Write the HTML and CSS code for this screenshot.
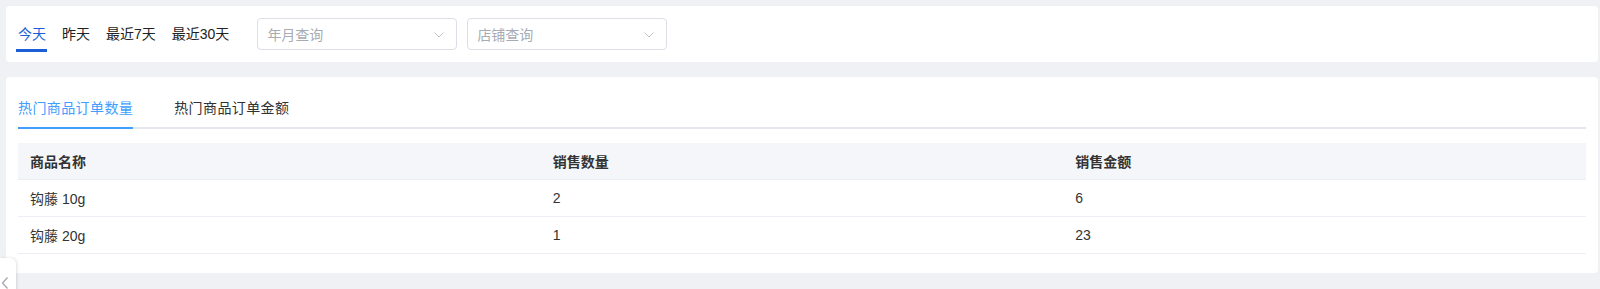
FILE: index.html
```html
<!DOCTYPE html>
<html lang="zh-CN">
<head>
<meta charset="utf-8">
<title>热门商品</title>
<link rel="stylesheet" href="styles.css">
</head>
<body>
<div class="page">
  <div class="card filter-card">
    <div class="date-tabs">
      <span class="date-tab active">今天</span>
      <span class="date-tab">昨天</span>
      <span class="date-tab">最近7天</span>
      <span class="date-tab">最近30天</span>
    </div>
    <div class="selects">
      <div class="select">
        <span class="placeholder">年月查询</span>
        <svg class="chev" width="10" height="6" viewBox="0 0 10 6"><path d="M0.5 0.5 L5 5 L9.5 0.5" fill="none" stroke="#c0c4cc" stroke-width="1"/></svg>
      </div>
      <div class="select">
        <span class="placeholder">店铺查询</span>
        <svg class="chev" width="10" height="6" viewBox="0 0 10 6"><path d="M0.5 0.5 L5 5 L9.5 0.5" fill="none" stroke="#c0c4cc" stroke-width="1"/></svg>
      </div>
    </div>
  </div>

  <div class="card data-card">
    <div class="tabs">
      <div class="tab active">热门商品订单数量</div>
      <div class="tab">热门商品订单金额</div>
    </div>
    <div class="table">
      <div class="row head">
        <div class="cell">商品名称</div>
        <div class="cell">销售数量</div>
        <div class="cell">销售金额</div>
      </div>
      <div class="row">
        <div class="cell">钩藤 10g</div>
        <div class="cell">2</div>
        <div class="cell">6</div>
      </div>
      <div class="row">
        <div class="cell">钩藤 20g</div>
        <div class="cell">1</div>
        <div class="cell">23</div>
      </div>
    </div>
  </div>
</div>
<div class="side-toggle">
  <svg width="8" height="12" viewBox="0 0 8 12"><path d="M6.5 0.5 L1.5 6 L6.5 11.5" fill="none" stroke="#a0a3ab" stroke-width="1.2"/></svg>
</div>
</body>
</html>
```

FILE: styles.css
```css
* { box-sizing: border-box; }
html, body {
  margin: 0;
  padding: 0;
  background: #f0f1f5;
  font-family: "Liberation Sans", "Noto Sans CJK SC", sans-serif;
  font-size: 14px;
  color: #333;
  overflow: hidden;
}
.page {
  padding: 6px 2px 0 6px;
}
.card {
  background: #fff;
  border-radius: 4px;
}
.filter-card {
  height: 56px;
  padding: 12px;
  display: flex;
  align-items: center;
}
.date-tabs {
  display: flex;
  gap: 16px;
  height: 32px;
  align-items: center;
}
.date-tab {
  position: relative;
  line-height: 20px;
  color: #222;
  margin-top: 0;
}
.date-tab.active {
  color: #1a5ed8;
}
.date-tab.active::after {
  content: "";
  position: absolute;
  left: -2px;
  right: -1px;
  top: 25px;
  height: 3px;
  background: #1a5ed8;
}
.selects {
  display: flex;
  gap: 10px;
  margin-left: 28px;
}
.select {
  width: 200px;
  height: 32px;
  border: 1px solid #dcdfe6;
  border-radius: 4px;
  display: flex;
  align-items: center;
  justify-content: space-between;
  padding: 0 12px 0 9px;
}
.placeholder {
  color: #a8abb2;
}
.chev { display: block; margin-top: 1px; }

.data-card {
  margin-top: 15px;
  padding: 12px 12px 19px 12px;
}
.tabs {
  display: flex;
  height: 40px;
  position: relative;
  margin-bottom: 14px;
}
.tabs::after {
  content: "";
  position: absolute;
  left: 0;
  right: 0;
  bottom: 0;
  height: 2px;
  background: #e4e7ed;
}
.tab {
  position: relative;
  line-height: 38px;
  padding: 0 20px;
  letter-spacing: 0.4px;
  color: #303133;
  z-index: 1;
}
.tab:first-child { padding-left: 0; padding-right: 21px; }
.tab.active { color: #409eff; }
.tab.active::after {
  content: "";
  position: absolute;
  left: 0;
  right: 21px;
  bottom: 0;
  height: 2px;
  background: #409eff;
}
.table {
  display: flex;
  flex-direction: column;
}
.row {
  display: grid;
  grid-template-columns: 1fr 1fr 1fr;
  height: 37px;
  border-bottom: 1px solid #ebeef5;
  align-items: center;
}
.row.head {
  background: #f5f6f9;
  font-weight: bold;
  color: #333;
}
.cell {
  padding-left: 12px;
  color: #333;
}
.side-toggle {
  position: absolute;
  left: 0;
  top: 258px;
  width: 16px;
  height: 40px;
  background: #fff;
  border-radius: 0 6px 0 0;
  box-shadow: 1px 0 3px rgba(0,0,0,0.12);
  padding: 19px 0 0 1px;
}
.side-toggle svg { display: block; }
```
